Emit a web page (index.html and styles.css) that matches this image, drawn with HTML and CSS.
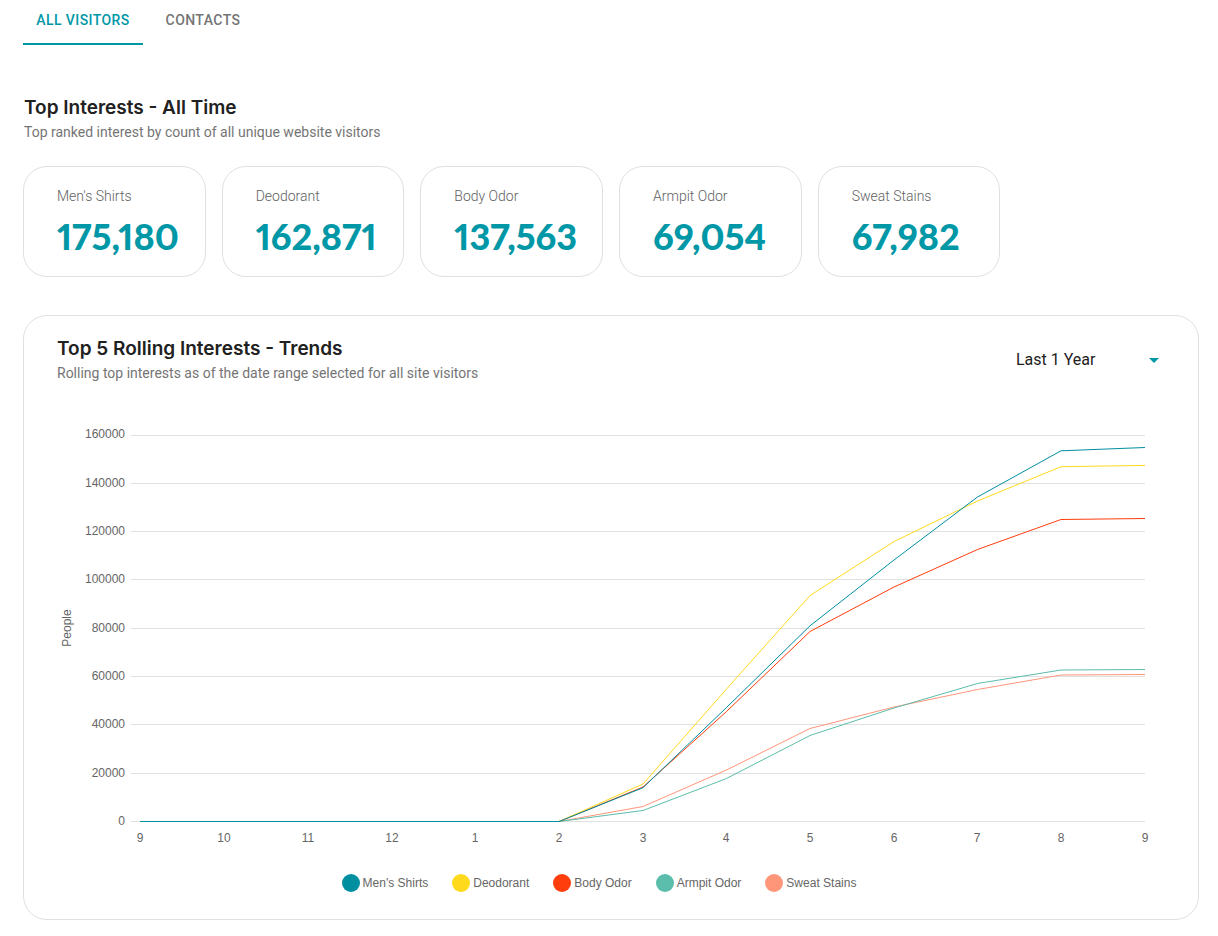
FILE: index.html
```html
<!DOCTYPE html>
<html lang="en">
<head>
<meta charset="utf-8">
<meta name="viewport" content="width=device-width, initial-scale=1">
<title>Top Interests</title>
<link rel="stylesheet" href="styles.css">
</head>
<body>
<nav class="tabs" role="tablist">
  <button class="tab tab-active" role="tab" aria-selected="true" type="button">ALL VISITORS</button>
  <button class="tab" role="tab" aria-selected="false" type="button">CONTACTS</button>
</nav>
<main>
  <section class="top-interests">
    <h2 class="title">Top Interests - All Time</h2>
    <p class="subtitle">Top ranked interest by count of all unique website visitors</p>
    <div class="cards">
      <article class="card"><h3 class="card-label">Men's Shirts</h3><p class="card-value">175,180</p></article>
      <article class="card"><h3 class="card-label">Deodorant</h3><p class="card-value">162,871</p></article>
      <article class="card"><h3 class="card-label">Body Odor</h3><p class="card-value">137,563</p></article>
      <article class="card"><h3 class="card-label">Armpit Odor</h3><p class="card-value">69,054</p></article>
      <article class="card"><h3 class="card-label">Sweat Stains</h3><p class="card-value">67,982</p></article>
    </div>
  </section>
  <section class="panel">
    <header class="panel-head">
      <div>
        <h2 class="title">Top 5 Rolling Interests - Trends</h2>
        <p class="subtitle">Rolling top interests as of the date range selected for all site visitors</p>
      </div>
      <div class="range">
        <select class="range-select" aria-label="Date range"><option>Last 1 Year</option></select>
        <svg class="range-arrow" viewBox="0 0 24 24" aria-hidden="true"><path d="M7 10l5 5 5-5z"/></svg>
      </div>
    </header>
    <svg class="chart" viewBox="0 0 1110 450" role="img" aria-label="People by month">
      <path class="grid" d="M75 35.5H1089M75 83.5H1089M75 131.5H1089M75 179.5H1089M75 228.5H1089M75 276.5H1089M75 324.5H1089M75 373.5H1089M75 421.5H1089"/>
      <g class="axis axis-y">
        <text x="69" y="38">160000</text>
        <text x="69" y="87">140000</text>
        <text x="69" y="135">120000</text>
        <text x="69" y="183">100000</text>
        <text x="69" y="232">80000</text>
        <text x="69" y="280">60000</text>
        <text x="69" y="328">40000</text>
        <text x="69" y="377">20000</text>
        <text x="69" y="425">0</text>
      </g>
      <g class="axis axis-x">
        <text x="84" y="442">9</text>
        <text x="168" y="442">10</text>
        <text x="252" y="442">11</text>
        <text x="336" y="442">12</text>
        <text x="419" y="442">1</text>
        <text x="503" y="442">2</text>
        <text x="587" y="442">3</text>
        <text x="670" y="442">4</text>
        <text x="754" y="442">5</text>
        <text x="838" y="442">6</text>
        <text x="921" y="442">7</text>
        <text x="1005" y="442">8</text>
        <text x="1089" y="442">9</text>
        <text x="15" y="228" transform="rotate(-90 15 228)">People</text>
      </g>
      <g class="lines">
        <polyline class="line-sweat" points="84,421.5 503,421.5 587,406.5 670.5,370 754,328.5 838,307 921.5,289.5 1005,275 1089,274.5"/>
        <polyline class="line-armpit" points="84,421.5 503,421.5 587,410.5 670.5,378.5 754,335.5 838,308 921.5,283.5 1005,270 1089,269.5"/>
        <polyline class="line-body" points="84,421.5 503,421.5 587,387 670.5,311.5 754,231.5 838,187 921.5,149.5 1005,119.5 1089,118.5"/>
        <polyline class="line-deodorant" points="84,421.5 503,421.5 587,384 670.5,289 754,195.5 838,141.5 921.5,101 1005,66.7 1089,65.4"/>
        <polyline class="line-shirts" points="84,421.5 503,421.5 587,387.7 670.5,307.5 754,225.8 838,160 921.5,97 1005,50.8 1089,47.5"/>
      </g>
    </svg>
    <ul class="legend">
      <li class="legend-item"><span class="dot dot-shirts"></span>Men's Shirts</li>
      <li class="legend-item"><span class="dot dot-deodorant"></span>Deodorant</li>
      <li class="legend-item"><span class="dot dot-body"></span>Body Odor</li>
      <li class="legend-item"><span class="dot dot-armpit"></span>Armpit Odor</li>
      <li class="legend-item"><span class="dot dot-sweat"></span>Sweat Stains</li>
    </ul>
  </section>
</main>
</body>
</html>
```
FILE: styles.css
```css
* { box-sizing: border-box; }
body {
  margin: 0;
  padding: 0 19px 16px 23px;
  background: #fff;
  color: #212121;
  font-family: Roboto, "Liberation Sans", sans-serif;
}
h2, h3, p, ul { margin: 0; padding: 0; }

.tabs { display: flex; }
.tab {
  min-width: 120px;
  height: 45px;
  padding: 0 12px 3px;
  border: 0;
  border-bottom: 2px solid transparent;
  background: none;
  color: #757575;
  font: 500 14px/20px Roboto, sans-serif;
  letter-spacing: 0.03em;
}
.tab-active { color: #0097a7; border-bottom-color: #0097a7; }

.top-interests { padding-top: 51px; }
.title {
  padding-left: 1px;
  font: 600 19px/24px Inter, sans-serif;
}
.subtitle {
  padding-left: 1px;
  color: #757575;
  font-size: 14px;
  line-height: 24px;
}

.cards {
  display: grid;
  grid-template-columns: repeat(6, 1fr);
  gap: 16px;
  margin-top: 22px;
}
.card {
  padding: 17px 0 18px 33px;
  border: 1px solid #e0e0e0;
  border-radius: 24px;
}
.card-label {
  color: #616161;
  font-size: 14px;
  font-weight: 300;
  line-height: 24px;
}
.card-value {
  padding-top: 6px;
  color: #0097a7;
  font: 900 36px/44px Lato, sans-serif;
  font-variant-numeric: proportional-nums;
}

.panel {
  margin-top: 38px;
  padding: 21px 32px 27px;
  border: 1px solid #e0e0e0;
  border-radius: 24px;
}
.panel-head {
  display: flex;
  justify-content: space-between;
  align-items: center;
}
.range { position: relative; }
.range-select {
  display: block;
  width: 166px;
  height: 44px;
  padding: 0 32px 2px 16px;
  border: 0;
  background: none;
  color: #212121;
  appearance: none;
  font: 400 16px/24px Roboto, sans-serif;
}
.range-arrow {
  position: absolute;
  top: 9px;
  right: 0;
  width: 24px;
  height: 24px;
  fill: #0097a7;
  pointer-events: none;
}

.chart { display: block; width: 100%; height: auto; margin-top: 15px; }
.grid { stroke: #e0e0e0; stroke-width: 1; }
.axis { fill: #666; font: 12px "Liberation Sans", sans-serif; }
.axis-y { text-anchor: end; }
.axis-x { text-anchor: middle; }
.lines { fill: none; stroke-width: 1; }
.line-shirts { stroke: #008fa1; }
.line-deodorant { stroke: #ffd91c; }
.line-body { stroke: #ff3d0d; }
.line-armpit { stroke: #5bbdab; }
.line-sweat { stroke: #ff967a; }

.legend {
  display: flex;
  flex-wrap: wrap;
  justify-content: center;
  gap: 8px 24px;
  margin-top: 24px;
  padding-right: 24px;
  list-style: none;
}
.legend-item {
  display: flex;
  align-items: center;
  gap: 3px;
  color: #666;
  font: 12px/18px "Liberation Sans", sans-serif;
}
.dot { width: 18px; height: 18px; border-radius: 50%; }
.dot-shirts { background: #008fa1; }
.dot-deodorant { background: #ffd91c; }
.dot-body { background: #ff3d0d; }
.dot-armpit { background: #5bbdab; }
.dot-sweat { background: #ff967a; }
```
